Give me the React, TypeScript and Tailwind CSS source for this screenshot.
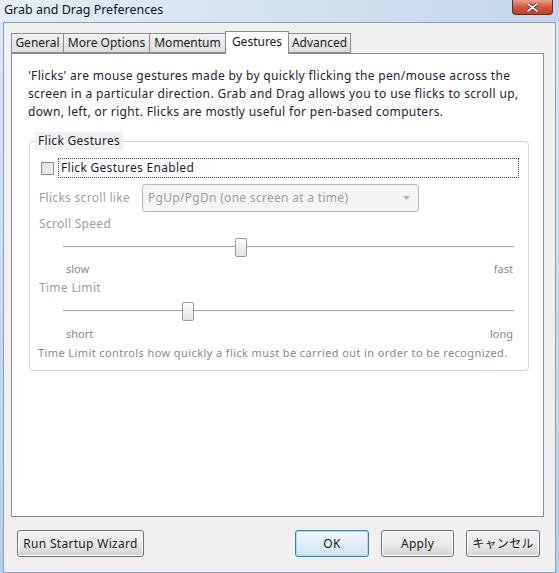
import { useState } from 'react'

const UI_FONT = "font-['Noto_Sans','Noto_Sans_CJK_JP',sans-serif]"

const TABS = [
  { label: 'General', w: 'w-[53px]' },
  { label: 'More Options', w: 'w-[86px]' },
  { label: 'Momentum', w: 'w-[76px]' },
  { label: 'Gestures', w: 'w-[64px]' },
  { label: 'Advanced', w: 'w-[63px]' },
]

function Tab({ label, w, active, onClick }: { label: string; w: string; active: boolean; onClick: () => void }) {
  if (active) {
    return (
      <button
        onClick={onClick}
        className={`${w} relative z-10 -mx-px -mb-px h-[23px] border border-b-0 border-[#898c95] bg-white pb-[2px] text-[12px] text-[#1a1a1a]`}
      >
        {label}
      </button>
    )
  }
  return (
    <button
      onClick={onClick}
      className={`${w} h-[20px] border border-[#898c95] bg-gradient-to-b from-[#f3f3f3] to-[#dcdcdc] text-[12px] text-[#1a1a1a] [&+&]:border-l-0`}
    >
      {label}
    </button>
  )
}

function Slider({ value }: { value: number }) {
  // value is the thumb's left edge in px along the 450px track
  return (
    <div className="relative ml-[33px] h-[19px] w-[451px]">
      <div className="absolute left-0 right-0 top-[8px] h-[1px] bg-[#a3a3a3]" />
      <div className="absolute left-0 right-0 top-[9px] h-[1px] bg-[#f7f7f7]" />
      <div
        className="absolute top-0 h-[19px] w-[12px] rounded-[2px] border border-[#9a9a9a] bg-gradient-to-b from-[#fbfbfb] to-[#e3e3e3]"
        style={{ left: value }}
      />
    </div>
  )
}

function Button({ children, w, focused }: { children: React.ReactNode; w: string; focused?: boolean }) {
  return (
    <button
      className={`${w} h-[27px] rounded-[3px] border text-[12px] tracking-[0.3px] text-[#1a1a1a] ${
        focused
          ? 'border-[#3c7fb1] bg-gradient-to-b from-[#f2f8fc] via-[#e1eef8] to-[#cfe4f3] shadow-[inset_0_0_0_1px_#a8dff7]'
          : 'border-[#707070] bg-gradient-to-b from-[#f2f2f2] via-[#ebebeb] to-[#d3d3d3] shadow-[inset_0_0_0_1px_#fcfcfc]'
      }`}
    >
      {children}
    </button>
  )
}

export default function App() {
  const [tab, setTab] = useState('Gestures')
  const [enabled, setEnabled] = useState(false)

  return (
    <div className={`${UI_FONT} flex h-[573px] w-[559px] flex-col overflow-hidden bg-gradient-to-b from-[#dbe7f3] via-[#c9dcee] to-[#b5cfe8]`}>
      {/* Title bar */}
      <div className="flex h-[22px] shrink-0 items-start justify-between bg-gradient-to-r from-[#e4edf6] via-[#d3e2f1] to-[#c2d7ec]">
        <span className="pl-[4px] pt-[1px] text-[12.5px] leading-[17px] text-[#111]">Grab and Drag Preferences</span>
        <div className="mr-[6px] flex h-[15px] w-[41px] items-center justify-center rounded-b-[4px] border border-t-0 border-[#6b2a1f] bg-gradient-to-b from-[#e8a08f] via-[#d0583c] to-[#c3401f]">
          <svg width="11" height="9" viewBox="0 0 11 9">
            <path d="M1 1 L10 8 M10 1 L1 8" stroke="#5a1a10" strokeWidth="3" strokeLinecap="round" />
            <path d="M1 1 L10 8 M10 1 L1 8" stroke="#fff" strokeWidth="1.6" strokeLinecap="round" />
          </svg>
        </div>
      </div>

      {/* Client area */}
      <div className="mx-[3px] flex flex-1 flex-col border border-[#8e9db0] bg-[#f0f0f0] pl-[7px] pr-[11px] pt-[8px]">
        <div className="flex h-[22px] items-end">
          {TABS.map((t) => (
            <Tab key={t.label} label={t.label} w={t.w} active={tab === t.label} onClick={() => setTab(t.label)} />
          ))}
        </div>

        <div className="h-[464px] w-[533px] border border-[#898c95] bg-white">
          <p className="pl-[16px] pr-[10px] pt-[13px] text-[12px] leading-[18px] tracking-[0.35px] text-[#1e1e2e]">
            'Flicks' are mouse gestures made by by quickly flicking the pen/mouse across the screen in a particular
            direction. Grab and Drag allows you to use flicks to scroll up, down, left, or right. Flicks are mostly
            useful for pen-based computers.
          </p>

          {/* Flick Gestures group */}
          <div className="relative ml-[17px] mt-[20px] h-[230px] w-[500px] rounded-[4px] border border-[#d5d5d5] text-[12px] tracking-[0.3px]">
            <span className="absolute -top-[10px] left-[5px] bg-[#f0f0f0] px-[3px] leading-[18px] text-[#1e1e2e]">
              Flick Gestures
            </span>

            <div className="mt-[16px] flex items-center pl-[11px]">
              <button
                onClick={() => setEnabled(!enabled)}
                className="flex h-[13px] w-[13px] items-center justify-center border border-[#8f8f8f] bg-gradient-to-br from-[#dcdcdc] to-[#f8f8f8]"
              >
                {enabled && (
                  <svg width="9" height="9" viewBox="0 0 9 9">
                    <path d="M1 4.5 L3.5 7 L8 1.5" stroke="#333" strokeWidth="1.6" fill="none" />
                  </svg>
                )}
              </button>
              <div className="ml-[4px] flex h-[20px] w-[461px] items-center border border-dotted border-[#555] pl-[2px] text-[#1e1e2e]">
                Flick Gestures Enabled
              </div>
            </div>

            <div className="mt-[6px] flex h-[28px] items-center">
              <span className="w-[112px] pl-[9px] text-[#a0a0a0]">Flicks scroll like</span>
              <div className="flex h-[28px] w-[277px] items-center justify-between rounded-[3px] border border-[#b7b7b7] bg-[#f4f4f4] pl-[5px] pr-[8px] text-[#a0a0a0]">
                <span>PgUp/PgDn (one screen at a time)</span>
                <svg width="7" height="4" viewBox="0 0 7 4">
                  <path d="M0 0 H7 L3.5 4 Z" fill="#b0b0b0" />
                </svg>
              </div>
            </div>

            <div className="mt-[4px] h-[16px] pl-[9px] leading-[16px] text-[#a0a0a0]">Scroll Speed</div>
            <div className="mt-[6px]">
              <Slider value={172} />
            </div>
            <div className="mt-[5px] flex h-[14px] w-[483px] justify-between pl-[36px] text-[11px] leading-[14px] tracking-normal text-[#8a8a8a]">
              <span>slow</span>
              <span>fast</span>
            </div>

            <div className="mt-[4px] h-[16px] pl-[9px] leading-[16px] text-[#a0a0a0]">Time Limit</div>
            <div className="mt-[6px]">
              <Slider value={119} />
            </div>
            <div className="mt-[6px] flex h-[14px] w-[483px] justify-between pl-[36px] text-[11px] leading-[14px] tracking-normal text-[#8a8a8a]">
              <span>short</span>
              <span>long</span>
            </div>

            <div className="mt-[5px] h-[14px] pl-[8px] text-[11px] leading-[14px] tracking-[0.4px] text-[#8a8a8a]">
              Time Limit controls how quickly a flick must be carried out in order to be recognized.
            </div>
          </div>
        </div>

        {/* Dialog buttons */}
        <div className="mt-[13px] flex items-center pl-[6px] pr-[4px]">
          <Button w="w-[127px]">Run Startup Wizard</Button>
          <div className="flex-1" />
          <Button w="w-[74px]" focused>
            OK
          </Button>
          <div className="w-[12px]" />
          <Button w="w-[73px]">Apply</Button>
          <div className="w-[12px]" />
          <Button w="w-[74px]">キャンセル</Button>
        </div>
      </div>
    </div>
  )
}
